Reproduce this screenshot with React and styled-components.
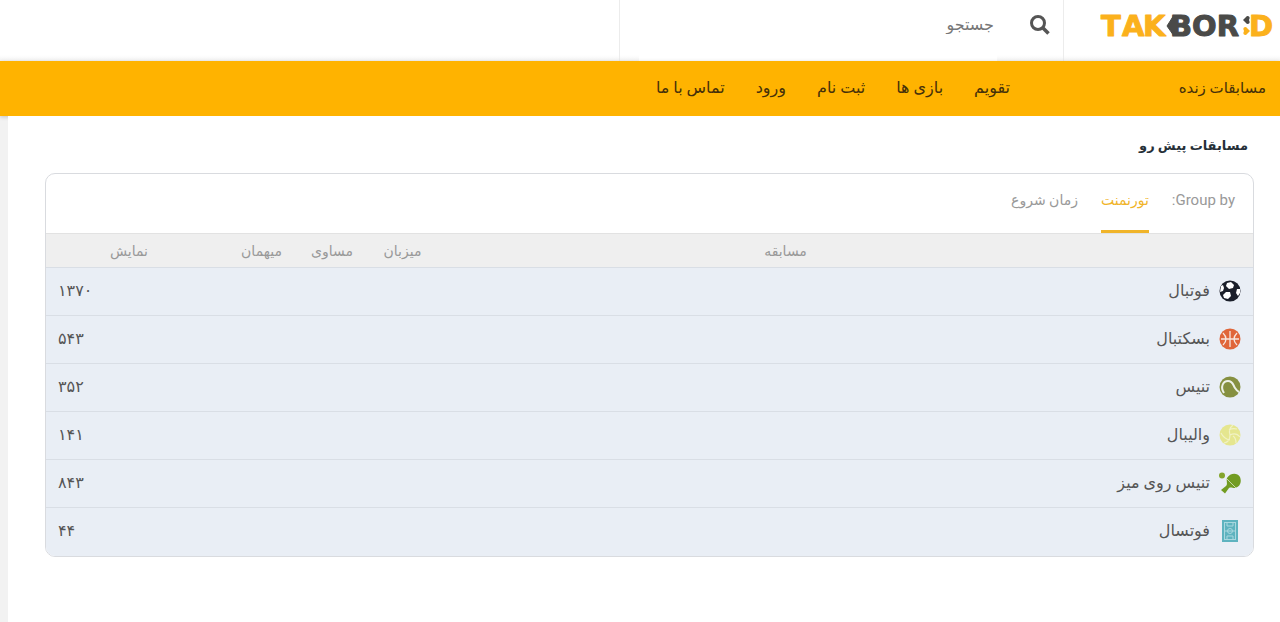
import React, { useState } from "react";
import styled, { createGlobalStyle } from "styled-components";

const GlobalStyle = createGlobalStyle`
  *, *::before, *::after { box-sizing: border-box; }
  body {
    margin: 0;
    background: #f2f2f2;
    color: #555;
    font-family: Roboto, "DejaVu Sans", sans-serif;
    font-size: 14px;
    line-height: 20px;
  }
  button, input { font: inherit; }
`;

const Page = styled.div`
  display: flex;
  flex-direction: column;
  min-height: 100vh;
`;

const Header = styled.header`
  display: flex;
  height: 61px;
  background: linear-gradient(#fff 55px, #f4f4f4);
`;

const Brand = styled.a`
  display: flex;
  justify-content: flex-start;
  width: 216px;
  padding: 6px 6px 0;
`;

const Search = styled.form`
  display: flex;
  width: 445px;
  padding: 0 13px 0 19px;
  border: solid #ececec;
  border-width: 0 1px;
`;

const SearchButton = styled.button`
  display: flex;
  align-items: flex-start;
  width: 53px;
  padding: 15px 0 0;
  border: 0;
  background: none;
  color: #555;
  cursor: pointer;
`;

const SearchInput = styled.input`
  flex: 1;
  min-width: 0;
  padding: 0 3px 12px;
  border: 0;
  outline: 0;
  background: #fff;
  color: #555;
  font-size: 16px;
  &::placeholder { color: #777; opacity: 1; }
`;

const Nav = styled.nav`
  display: flex;
  align-items: center;
  height: 55px;
  padding: 0 14px 2px;
  background: #ffb300;
  box-shadow: 0 1px 4px rgba(0, 0, 0, 0.2);
`;

const NavLink = styled.a`
  color: #45300a;
  font-size: ${(p) => (p.$live ? "15px" : "16px")};
  text-decoration: none;
  white-space: nowrap;
`;

const LiveSlot = styled.div`
  width: 256px;
`;

const NavList = styled.div`
  display: flex;
  gap: 31px;
`;

const Main = styled.main`
  position: relative;
  flex: 1;
  margin-left: 8px;
  padding: 20px 26px 40px 37px;
  background: #fff;
`;

const Title = styled.h1`
  margin: 0 6px 17px;
  color: #263038;
  font-size: 13px;
  line-height: 20px;
  font-weight: 700;
`;

const Card = styled.section`
  overflow: hidden;
  border: 1px solid #d9dbdf;
  border-radius: 10px;
`;

const Tabs = styled.div`
  display: flex;
  gap: 23px;
  height: 59px;
  padding: 0 18px;
  color: #999;
`;

const TabsLabel = styled.span`
  padding-top: 16px;
  font-size: 15px;
`;

const Tab = styled.button`
  padding: 16px 0 20px;
  border: 0;
  border-bottom: 3px solid ${(p) => (p.$active ? "#f0b429" : "transparent")};
  background: none;
  color: ${(p) => (p.$active ? "#f0b429" : "#999")};
  cursor: pointer;
`;

const Table = styled.table`
  width: 100%;
  table-layout: fixed;
  border-collapse: collapse;
`;

const HeadCell = styled.th`
  width: ${(p) => p.$width || "auto"};
  height: 34px;
  padding: ${(p) => p.$padding || "0"};
  border-top: 1px solid #e2e2e2;
  background: #efefef;
  color: #999;
  font-size: 14px;
  font-weight: 400;
  text-align: center;
`;

const Row = styled.tr`
  height: 48px;
  border-top: 1px solid #d9dee5;
  background: #e9eef5;
  font-size: 16px;
`;

const SportCell = styled.th`
  padding: 0 12px 2px;
  font-weight: 400;
  text-align: right;
`;

const Sport = styled.a`
  display: inline-flex;
  align-items: center;
  gap: 9px;
  color: #555;
  text-decoration: none;
  vertical-align: middle;
`;

const CountCell = styled.td`
  padding: 0 12px 2px;
  text-align: left;
`;

function Logo() {
  return (
    <svg width="174" height="42" viewBox="0 0 174 42" direction="ltr" role="img" aria-label="TAKBORD">
      <g fontFamily="DejaVu Sans" fontWeight="700" fontSize="29" strokeWidth="1" strokeLinejoin="round">
        <g fill="#fbb11c" stroke="#fbb11c">
          <text x="1" y="30">T</text>
          <text x="22" y="30">A</text>
          <text x="43" y="30">K</text>
          <text x="149" y="30">D</text>
        </g>
        <path d="M74 9v21l-7-10z" fill="#4a4a48" stroke="#4a4a48" />
        <text x="70" y="30" fill="#4a4a48" stroke="#4a4a48">BOR</text>
      </g>
      <path d="M143 14l4-4q4 0 2 4 2 4-2 4z" fill="#4a4a48" />
      <path d="M150 25l-4-4q-4 0-2 4-2 4 2 4z" fill="#fbb11c" />
    </svg>
  );
}

const SearchIcon = () => (
  <svg width="20" height="20" viewBox="0 0 20 20" fill="none" stroke="currentColor" aria-hidden="true">
    <circle cx="8" cy="8" r="6.500" strokeWidth="3" />
    <path d="M12.500 12.500l6 6" strokeWidth="3.500" />
  </svg>
);

const icons = {
  football: (
    <>
      <circle cx="11" cy="11" r="10.500" fill="#1b1f2a" />
      <g fill="#fff">
        <path d="M8 3l4-1 3 3-1 3-4 1-3-3z" />
        <path d="M2 6l2-1 1 3-1 3-3 1z" />
        <path d="M7 12l4 0 1 4-3 3-4-1-1-3z" />
        <path d="M18 9l3 0 0 4-2 3-2-3z" />
      </g>
    </>
  ),
  basketball: (
    <>
      <circle cx="11" cy="11" r="10.500" fill="#e0663a" />
      <path d="M11 3v16M2 11h18M4 5q6 6 0 12M18 5q-6 6 0 12" fill="none" stroke="#f6e6df" strokeWidth="1.300" />
    </>
  ),
  tennis: (
    <>
      <circle cx="11" cy="11" r="10.500" fill="#869040" />
      <path d="M5 17C1 11 4 5 9 5c5 0 5 4 7 7q2 3 4 4" fill="none" stroke="#edf1e6" strokeWidth="2" />
    </>
  ),
  volleyball: (
    <>
      <circle cx="11" cy="11" r="10.500" fill="#e5e68f" />
      <path
        d="M11 11Q9 5 14 1M11 11q6-3 10 2M11 11q0 7-6 8M18 5q-5-1-8 1M17 19q0-5-3-7M2 9q3 6 9 7"
        fill="none"
        stroke="#f1f2c4"
        strokeWidth="1.200"
      />
    </>
  ),
  tableTennis: (
    <>
      <circle cx="3" cy="3.500" r="3" fill="#84a52c" />
      <path d="M8 6C11 1 18 0 21 5c2 5 0 10-5 11-3 0-4-1-6 0l-4 5.500-4-3.500 5-4c2-2 0-5 1-8z" fill="#729c22" />
      <path d="M8 7l9 9" stroke="#c5d8a4" strokeWidth="1" />
    </>
  ),
  futsal: (
    <>
      <rect x="3" y="0" width="16" height="22" fill="#5eb3bf" />
      <g fill="none" stroke="#a9d8df" strokeWidth="1">
        <rect x="5.500" y="2.500" width="11" height="17" />
        <path d="M5 11h12M8 3v3h6V3M8 19v-3h6v3" />
        <circle cx="11" cy="11" r="2.500" />
      </g>
    </>
  ),
};

const navItems = ["تقویم", "بازی ها", "ثبت نام", "ورود", "تماس با ما"];
const tabs = ["تورنمنت", "زمان شروع"];
const sports = [
  { icon: "football", name: "فوتبال", count: "۱۳۷۰" },
  { icon: "basketball", name: "بسکتبال", count: "۵۴۳" },
  { icon: "tennis", name: "تنیس", count: "۳۵۲" },
  { icon: "volleyball", name: "والیبال", count: "۱۴۱" },
  { icon: "tableTennis", name: "تنیس روی میز", count: "۸۴۳" },
  { icon: "futsal", name: "فوتسال", count: "۴۴" },
];

export default function App() {
  const [active, setActive] = useState(0);
  return (
    <Page dir="rtl" lang="fa">
      <GlobalStyle />
      <Header>
        <Brand href="#"><Logo /></Brand>
        <Search role="search" onSubmit={(e) => e.preventDefault()}>
          <SearchButton type="submit" aria-label="جستجو"><SearchIcon /></SearchButton>
          <SearchInput type="text" placeholder="جستجو" aria-label="جستجو" />
        </Search>
      </Header>
      <Nav>
        <LiveSlot><NavLink href="#" $live>مسابقات زنده</NavLink></LiveSlot>
        <NavList>
          {navItems.map((item) => <NavLink href="#" key={item}>{item}</NavLink>)}
        </NavList>
      </Nav>
      <Main>
        <Title>مسابقات پیش رو</Title>
        <Card>
          <Tabs>
            <TabsLabel>Group by:</TabsLabel>
            {tabs.map((tab, i) => (
              <Tab type="button" key={tab} $active={i === active} aria-pressed={i === active} onClick={() => setActive(i)}>
                {tab}
              </Tab>
            ))}
          </Tabs>
          <Table>
            <thead>
              <tr>
                <HeadCell as="td" $width="120px" />
                <HeadCell scope="col">مسابقه</HeadCell>
                <HeadCell scope="col" $width="71px">میزبان</HeadCell>
                <HeadCell scope="col" $width="70px">مساوی</HeadCell>
                <HeadCell scope="col" $width="71px">میهمان</HeadCell>
                <HeadCell scope="col" $width="180px" $padding="0 14px 0 0">نمایش</HeadCell>
              </tr>
            </thead>
            <tbody>
              {sports.map((s) => (
                <Row key={s.name}>
                  <SportCell scope="row" colSpan={5}>
                    <Sport href="#">
                      <svg width="22" height="22" viewBox="0 0 22 22" aria-hidden="true">{icons[s.icon]}</svg>
                      {s.name}
                    </Sport>
                  </SportCell>
                  <CountCell>{s.count}</CountCell>
                </Row>
              ))}
            </tbody>
          </Table>
        </Card>
      </Main>
    </Page>
  );
}
